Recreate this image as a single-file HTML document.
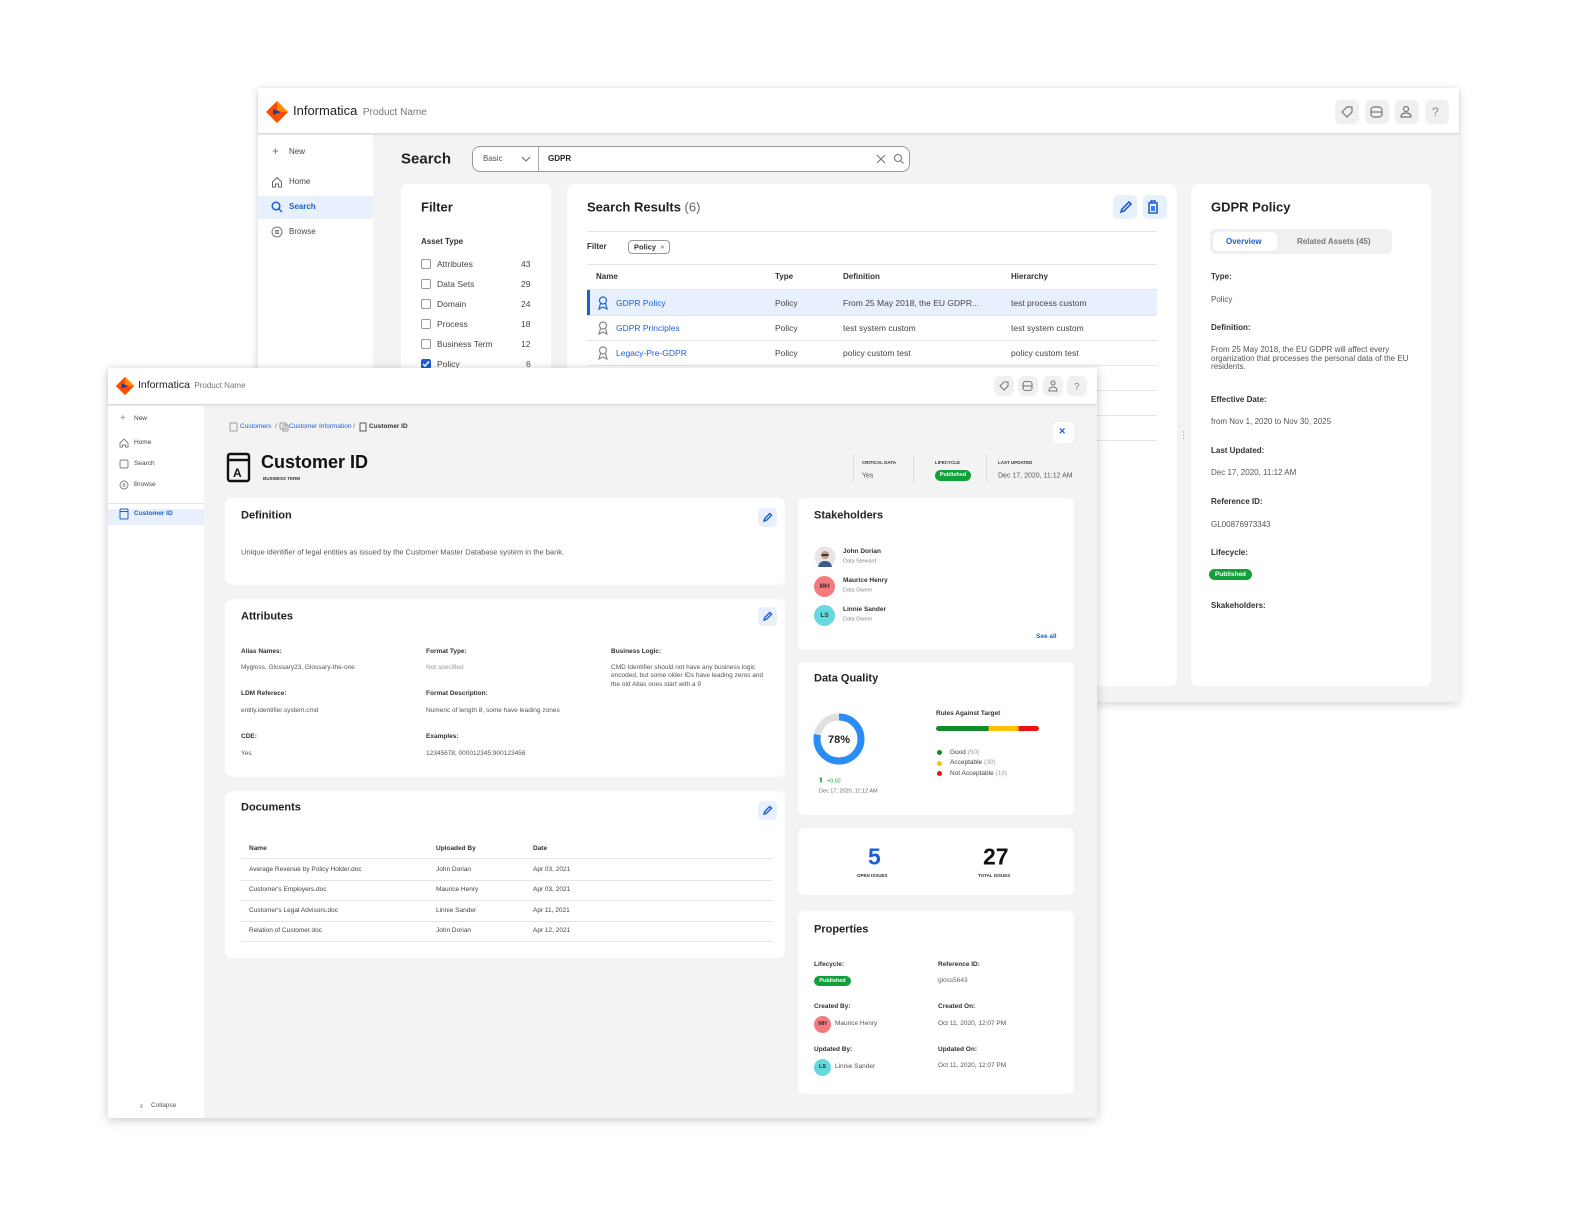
<!DOCTYPE html>
<html><head><meta charset="utf-8">
<style>
*{margin:0;padding:0;box-sizing:border-box}
body{width:1584px;height:1224px;background:#fff;position:relative;overflow:hidden;font-family:"Liberation Sans",Arial,sans-serif;color:#222}
.a{position:absolute}
.t{position:absolute;white-space:nowrap;line-height:1;transform:translateY(-50%)}
.b{font-weight:bold}
.g{color:#666}
.bl{color:#1a5fd6}
.card{position:absolute;background:#fff;border-radius:7px}
.ib{position:absolute;background:#f0f0f0;border-radius:6px}
.eb{position:absolute;background:#e8f0fe;border-radius:5px}
.hl{position:absolute;height:1px;background:#e4e4e4}
.badge{position:absolute;background:#12a03a;color:#fff;font-weight:bold;border-radius:8px;text-align:center}
.cb{position:absolute;width:10px;height:10px;border:1px solid #999;border-radius:2px;background:#fff}
</style></head><body>

<!-- ================= BACK WINDOW ================= -->
<div class="a" style="left:258px;top:88px;width:1201px;height:614px;background:#f3f3f3;box-shadow:0 2px 8px rgba(0,0,0,.18)"></div>
<div class="a" style="left:258px;top:88px;width:1201px;height:46px;background:#fff;border-bottom:1px solid #ddd;box-shadow:0 1px 3px rgba(0,0,0,.08)"></div>
<svg class="a" style="left:265px;top:100px" width="24" height="24" viewBox="0 0 24 24"><polygon points="12,1 23,12 12,23 1,12" fill="#ff4d00"/><polygon points="12,1 23,12 12,12" fill="#ff8a00"/><polygon points="8,9 16,12 8,15" fill="#1b3fa8"/></svg>
<div class="t" style="left:293px;top:111px;font-size:13px;color:#222">Informatica<span style="font-size:10px;color:#777"> &nbsp;Product Name</span></div>
<div class="ib" style="left:1335px;top:100px;width:24px;height:24px"></div>
<div class="ib" style="left:1365px;top:100px;width:24px;height:24px"></div>
<div class="ib" style="left:1395px;top:100px;width:24px;height:24px"></div>
<div class="ib" style="left:1425px;top:100px;width:24px;height:24px"></div>
<svg class="a" style="left:1335px;top:100px" width="120" height="24" viewBox="0 0 120 24" fill="none" stroke="#777" stroke-width="1.2"><path d="M7 12l5-5h5v5l-5 5z"/><rect x="36" y="7" width="11" height="10" rx="3"/><path d="M36 12h11"/><circle cx="71" cy="9" r="2.5"/><path d="M66 17c0-3 2-4 5-4s5 1 5 4z"/><text x="97" y="16" font-size="12" fill="#888" stroke="none" font-family="Liberation Sans">?</text></svg>
<!-- back sidebar -->
<div class="a" style="left:258px;top:135px;width:115px;height:567px;background:#fff"></div>
<div class="a" style="left:258px;top:196px;width:115px;height:23px;background:#e8f0fe"></div>
<div class="t" style="left:272px;top:151px;font-size:12px;color:#777">+</div>
<div class="t" style="left:289px;top:152px;font-size:8px;color:#444">New</div>
<svg class="a" style="left:271px;top:176px" width="12" height="12" viewBox="0 0 12 12" fill="none" stroke="#666"><path d="M1.5 6L6 1.5 10.5 6v5h-3V8h-3v3h-3z"/></svg>
<div class="t" style="left:289px;top:182px;font-size:8px;color:#444">Home</div>
<svg class="a" style="left:271px;top:201px" width="12" height="12" viewBox="0 0 12 12" fill="none" stroke="#1a5fd6" stroke-width="1.5"><circle cx="5" cy="5" r="3.8"/><path d="M8 8l3 3"/></svg>
<div class="t b bl" style="left:289px;top:207px;font-size:8px">Search</div>
<svg class="a" style="left:271px;top:226px" width="12" height="12" viewBox="0 0 12 12" fill="none" stroke="#777"><circle cx="6" cy="6" r="5"/><path d="M4 4.5h4M4 6h4M4 7.5h4"/></svg>
<div class="t" style="left:289px;top:232px;font-size:8px;color:#444">Browse</div>
<!-- search bar -->
<div class="t b" style="left:401px;top:159px;font-size:15px">Search</div>
<div class="a" style="left:472px;top:146px;width:438px;height:26px;border:1px solid #999;border-radius:8px;background:#fff"></div>
<div class="a" style="left:538px;top:147px;width:1px;height:24px;background:#aaa"></div>
<div class="t" style="left:483px;top:159px;font-size:8px;color:#555">Basic</div>
<svg class="a" style="left:521px;top:155px" width="10" height="8"><path d="M1 2l4 4 4-4" fill="none" stroke="#666"/></svg>
<div class="t b" style="left:548px;top:159px;font-size:8px">GDPR</div>
<svg class="a" style="left:876px;top:154px" width="30" height="10" fill="none" stroke="#777" stroke-width="1.1"><path d="M1 1l8 8M9 1l-8 8"/><circle cx="22" cy="4" r="3.5"/><path d="M24.5 6.5l3 3"/></svg>
<!-- filter card -->
<div class="card" style="left:401px;top:184px;width:150px;height:500px"></div>
<div class="t b" style="left:421px;top:207px;font-size:13px">Filter</div>
<div class="t b" style="left:421px;top:242px;font-size:8px;color:#333">Asset Type</div>
<div class="cb" style="left:421px;top:259px"></div><div class="t" style="left:437px;top:264px;font-size:8.5px;color:#444">Attributes</div><div class="t" style="left:521px;top:264px;font-size:8.5px;color:#444">43</div>
<div class="cb" style="left:421px;top:279px"></div><div class="t" style="left:437px;top:284px;font-size:8.5px;color:#444">Data Sets</div><div class="t" style="left:521px;top:284px;font-size:8.5px;color:#444">29</div>
<div class="cb" style="left:421px;top:299px"></div><div class="t" style="left:437px;top:304px;font-size:8.5px;color:#444">Domain</div><div class="t" style="left:521px;top:304px;font-size:8.5px;color:#444">24</div>
<div class="cb" style="left:421px;top:319px"></div><div class="t" style="left:437px;top:324px;font-size:8.5px;color:#444">Process</div><div class="t" style="left:521px;top:324px;font-size:8.5px;color:#444">18</div>
<div class="cb" style="left:421px;top:339px"></div><div class="t" style="left:437px;top:344px;font-size:8.5px;color:#444">Business Term</div><div class="t" style="left:521px;top:344px;font-size:8.5px;color:#444">12</div>
<div class="cb" style="left:421px;top:359px;background:#1a5fd6;border-color:#1a5fd6"></div>
<svg class="a" style="left:421px;top:359px" width="10" height="10"><path d="M2 5l2 2 4-4.5" fill="none" stroke="#fff" stroke-width="1.5"/></svg>
<div class="t" style="left:437px;top:364px;font-size:8.5px;color:#444">Policy</div><div class="t" style="left:526px;top:364px;font-size:8.5px;color:#444">6</div>
<!-- results card -->
<div class="card" style="left:567px;top:184px;width:610px;height:502px"></div>
<div class="t b" style="left:587px;top:207px;font-size:13px">Search Results <span style="font-weight:normal;color:#666">(6)</span></div>
<div class="eb" style="left:1113px;top:195px;width:24px;height:24px"></div>
<div class="eb" style="left:1143px;top:195px;width:24px;height:24px"></div>
<svg class="a" style="left:1113px;top:195px" width="56" height="24" fill="none" stroke="#1a5fd6" stroke-width="1.6"><path d="M8 17l1-3 7-7 2 2-7 7z"/><path d="M35 8h10M38 8V6h4v2M36 9v9h8V9M39 11v5M41 11v5"/></svg>
<div class="hl" style="left:587px;top:231px;width:570px"></div>
<div class="t b" style="left:587px;top:247px;font-size:8px;color:#333">Filter</div>
<div class="a" style="left:628px;top:240px;width:42px;height:14px;border:1px solid #999;border-radius:4px"></div>
<div class="t b" style="left:634px;top:247px;font-size:7.5px;color:#333">Policy <span style="font-weight:normal;color:#666">&nbsp;×</span></div>
<div class="hl" style="left:587px;top:264px;width:570px"></div>
<div class="t b" style="left:596px;top:277px;font-size:8px;color:#333">Name</div>
<div class="t b" style="left:775px;top:277px;font-size:8px;color:#333">Type</div>
<div class="t b" style="left:843px;top:277px;font-size:8px;color:#333">Definition</div>
<div class="t b" style="left:1011px;top:277px;font-size:8px;color:#333">Hierarchy</div>
<div class="a" style="left:587px;top:290px;width:570px;height:25px;background:#e8f0fe"></div>
<div class="a" style="left:587px;top:290px;width:3px;height:25px;background:#1a5fd6"></div>
<div class="hl" style="left:587px;top:289px;width:570px"></div>
<div class="hl" style="left:587px;top:315px;width:570px"></div>
<div class="hl" style="left:587px;top:340px;width:570px"></div>
<div class="hl" style="left:587px;top:365px;width:570px"></div>
<div class="hl" style="left:587px;top:390px;width:570px"></div>
<div class="hl" style="left:587px;top:415px;width:570px"></div>
<div class="hl" style="left:587px;top:440px;width:570px"></div>
<svg class="a" style="left:597px;top:296px" width="12" height="64" fill="none" stroke-width="1.2"><g stroke="#1a5fd6"><circle cx="6" cy="4.5" r="3.5"/><path d="M3.5 7.5L2 13l4-2 4 2-1.5-5.5"/></g><g stroke="#888" transform="translate(0,25)"><circle cx="6" cy="4.5" r="3.5"/><path d="M3.5 7.5L2 13l4-2 4 2-1.5-5.5"/></g><g stroke="#888" transform="translate(0,50)"><circle cx="6" cy="4.5" r="3.5"/><path d="M3.5 7.5L2 13l4-2 4 2-1.5-5.5"/></g></svg>
<div class="t bl" style="left:616px;top:303px;font-size:8.5px">GDPR Policy</div>
<div class="t bl" style="left:616px;top:328px;font-size:8.5px">GDPR Principles</div>
<div class="t bl" style="left:616px;top:353px;font-size:8.5px">Legacy-Pre-GDPR</div>
<div class="t" style="left:775px;top:303px;font-size:8.5px;color:#444">Policy</div>
<div class="t" style="left:775px;top:328px;font-size:8.5px;color:#444">Policy</div>
<div class="t" style="left:775px;top:353px;font-size:8.5px;color:#444">Policy</div>
<div class="t" style="left:843px;top:303px;font-size:8.5px;color:#444">From 25 May 2018, the EU GDPR...</div>
<div class="t" style="left:843px;top:328px;font-size:8.5px;color:#444">test system custom</div>
<div class="t" style="left:843px;top:353px;font-size:8.5px;color:#444">policy custom test</div>
<div class="t" style="left:1011px;top:303px;font-size:8.5px;color:#444">test process custom</div>
<div class="t" style="left:1011px;top:328px;font-size:8.5px;color:#444">test system custom</div>
<div class="t" style="left:1011px;top:353px;font-size:8.5px;color:#444">policy custom test</div>
<div class="t" style="left:1182px;top:435px;font-size:9px;color:#888;line-height:.35">·<br>·<br>·</div>
<!-- detail card -->
<div class="card" style="left:1191px;top:184px;width:240px;height:502px"></div>
<div class="t b" style="left:1211px;top:207px;font-size:13px">GDPR Policy</div>
<div class="a" style="left:1210px;top:229px;width:182px;height:25px;background:#f0f0f0;border-radius:6px"></div>
<div class="a" style="left:1213px;top:232px;width:64px;height:19px;background:#fff;border-radius:5px"></div>
<div class="t b bl" style="left:1226px;top:242px;font-size:8px">Overview</div>
<div class="t b" style="left:1297px;top:242px;font-size:8px;color:#777">Related Assets (45)</div>
<div class="t b" style="left:1211px;top:277px;font-size:8px;color:#333">Type:</div>
<div class="t" style="left:1211px;top:300px;font-size:8px;color:#555">Policy</div>
<div class="t b" style="left:1211px;top:328px;font-size:8px;color:#333">Definition:</div>
<div class="a" style="left:1211px;top:346px;font-size:8px;color:#555;line-height:8.5px;width:200px">From 25 May 2018, the EU GDPR will affect every organization that processes the personal data of the EU residents.</div>
<div class="t b" style="left:1211px;top:400px;font-size:8px;color:#333">Effective Date:</div>
<div class="t" style="left:1211px;top:422px;font-size:8px;color:#555">from Nov 1, 2020 to Nov 30, 2025</div>
<div class="t b" style="left:1211px;top:451px;font-size:8px;color:#333">Last Updated:</div>
<div class="t" style="left:1211px;top:473px;font-size:8px;color:#555">Dec 17, 2020, 11:12 AM</div>
<div class="t b" style="left:1211px;top:502px;font-size:8px;color:#333">Reference ID:</div>
<div class="t" style="left:1211px;top:525px;font-size:8px;color:#555">GL00876973343</div>
<div class="t b" style="left:1211px;top:553px;font-size:8px;color:#333">Lifecycle:</div>
<div class="badge" style="left:1209px;top:569px;width:43px;height:11px;font-size:6.5px;line-height:11px">Published</div>
<div class="t b" style="left:1211px;top:606px;font-size:8px;color:#333">Skakeholders:</div>

<!-- ================= FRONT WINDOW ================= -->
<div class="a" style="left:108px;top:368px;width:989px;height:750px;background:#f3f3f3;box-shadow:0 2px 10px rgba(0,0,0,.22)"></div>
<div class="a" style="left:108px;top:368px;width:989px;height:37px;background:#fff;border-bottom:1px solid #ddd;box-shadow:0 1px 3px rgba(0,0,0,.08)"></div>
<svg class="a" style="left:115px;top:376px" width="20" height="20" viewBox="0 0 24 24"><polygon points="12,1 23,12 12,23 1,12" fill="#ff4d00"/><polygon points="12,1 23,12 12,12" fill="#ff8a00"/><polygon points="8,9 16,12 8,15" fill="#1b3fa8"/></svg>
<div class="t" style="left:138px;top:385px;font-size:10.5px">Informatica<span style="font-size:8px;color:#777"> &nbsp;Product Name</span></div>
<div class="ib" style="left:994px;top:376px;width:20px;height:20px"></div>
<div class="ib" style="left:1018px;top:376px;width:20px;height:20px"></div>
<div class="ib" style="left:1043px;top:376px;width:20px;height:20px"></div>
<div class="ib" style="left:1067px;top:376px;width:20px;height:20px"></div>
<svg class="a" style="left:994px;top:376px" width="96" height="20" fill="none" stroke="#777" stroke-width="1.1"><path d="M6 10l4-4h4v4l-4 4z"/><rect x="29" y="5.5" width="9" height="9" rx="2.5"/><path d="M29 10h9"/><circle cx="59" cy="7" r="2"/><path d="M55 15c0-3 2-4 4-4s4 1 4 4z"/><text x="80" y="14" font-size="10" fill="#888" stroke="none" font-family="Liberation Sans">?</text></svg>
<!-- front sidebar -->
<div class="a" style="left:108px;top:406px;width:96px;height:712px;background:#fff"></div>
<div class="a" style="left:108px;top:503px;width:96px;height:1px;background:#e4e4e4"></div>
<div class="a" style="left:108px;top:509px;width:96px;height:16px;background:#e8f0fe"></div>
<div class="t" style="left:120px;top:419px;font-size:10px;color:#888">+</div>
<div class="t" style="left:134px;top:419px;font-size:6.5px;color:#444">New</div>
<svg class="a" style="left:119px;top:438px" width="10" height="10" fill="none" stroke="#777" stroke-width=".9"><path d="M1 5L5 1l4 4v4H6.5V7h-3v2H1z"/></svg>
<div class="t" style="left:134px;top:443px;font-size:6.5px;color:#444">Home</div>
<svg class="a" style="left:119px;top:459px" width="10" height="10" fill="none" stroke="#777" stroke-width=".9"><rect x="1" y="1" width="8" height="8" rx="1.5"/></svg>
<div class="t" style="left:134px;top:464px;font-size:6.5px;color:#444">Search</div>
<svg class="a" style="left:119px;top:480px" width="10" height="10" fill="none" stroke="#777" stroke-width=".9"><circle cx="5" cy="5" r="4"/><path d="M3.5 4h3M3.5 6h3"/></svg>
<div class="t" style="left:134px;top:485px;font-size:6.5px;color:#444">Browse</div>
<svg class="a" style="left:119px;top:508px" width="10" height="12" fill="none" stroke="#1a5fd6" stroke-width="1"><rect x="1" y="1" width="8" height="10" rx="1"/><path d="M1 3.5h8"/></svg>
<div class="t b bl" style="left:134px;top:514px;font-size:6.5px">Customer ID</div>
<div class="t" style="left:140px;top:1106px;font-size:9px;color:#666">‹</div>
<div class="t" style="left:151px;top:1106px;font-size:6.5px;color:#555">Collapse</div>
<!-- breadcrumb -->
<svg class="a" style="left:229px;top:422px" width="150" height="10" fill="none" stroke="#888" stroke-width=".8"><rect x="1" y="1" width="7" height="8"/><rect x="51" y="1" width="6" height="6"/><rect x="54" y="3" width="5" height="6"/><rect x="131" y="1" width="6" height="8" stroke="#333"/></svg>
<div class="t" style="left:240px;top:427px;font-size:6.5px"><span class="bl">Customers</span> <span class="g">&nbsp;/&nbsp;</span></div>
<div class="t bl" style="left:289px;top:427px;font-size:6.5px">Customer Information</div>
<div class="t g" style="left:353px;top:427px;font-size:6.5px">/</div>
<div class="t b" style="left:369px;top:427px;font-size:6.5px;color:#333">Customer ID</div>
<svg class="a" style="left:226px;top:452px" width="26" height="32" fill="none" stroke="#111" stroke-width="2.4"><rect x="2" y="2" width="21" height="27" rx="2"/><path d="M2 8h21"/><text x="7" y="25" font-size="12" font-weight="bold" fill="#111" stroke="none" font-family="Liberation Sans">A</text></svg>
<div class="t b" style="left:261px;top:462px;font-size:18px;color:#111">Customer ID</div>
<div class="t b" style="left:263px;top:479px;font-size:4.5px;color:#333">BUSINESS TERM</div>
<div class="a" style="left:1053px;top:422px;width:21px;height:21px;background:#fff;border-radius:5px"></div>
<div class="t b bl" style="left:1059px;top:432px;font-size:11px">×</div>
<div class="a" style="left:853px;top:455px;width:1px;height:28px;background:#ddd"></div>
<div class="a" style="left:913px;top:455px;width:1px;height:28px;background:#ddd"></div>
<div class="a" style="left:986px;top:455px;width:1px;height:28px;background:#ddd"></div>
<div class="t b" style="left:862px;top:463px;font-size:4.5px;color:#333">CRITICAL DATA</div>
<div class="t" style="left:862px;top:476px;font-size:7px;color:#555">Yes</div>
<div class="t b" style="left:935px;top:463px;font-size:4.5px;color:#333">LIFECYCLE</div>
<div class="badge" style="left:935px;top:470px;width:36px;height:11px;font-size:5.5px;line-height:11px">Published</div>
<div class="t b" style="left:998px;top:463px;font-size:4.5px;color:#333">LAST UPDATED</div>
<div class="t" style="left:998px;top:476px;font-size:7px;color:#555">Dec 17, 2020, 11:12 AM</div>
<!-- Definition -->
<div class="card" style="left:225px;top:498px;width:560px;height:87px"></div>
<div class="t b" style="left:241px;top:516px;font-size:11px">Definition</div>
<div class="eb" style="left:758px;top:508px;width:19px;height:19px"></div>
<div class="t" style="left:241px;top:552px;font-size:7.5px;color:#555">Unique identifier of legal entities as issued by the Customer Master Database system in the bank.</div>
<!-- Attributes -->
<div class="card" style="left:225px;top:599px;width:560px;height:178px"></div>
<div class="t b" style="left:241px;top:617px;font-size:11px">Attributes</div>
<div class="eb" style="left:758px;top:607px;width:19px;height:19px"></div>
<div class="t b" style="left:241px;top:652px;font-size:6.5px;color:#333">Alias Names:</div>
<div class="t" style="left:241px;top:668px;font-size:6.5px;color:#555">Mygloss, Glossary23, Glossary-the-one</div>
<div class="t b" style="left:241px;top:694px;font-size:6.5px;color:#333">LDM Referece:</div>
<div class="t" style="left:241px;top:711px;font-size:6.5px;color:#555">entity.identifier.system.cmd</div>
<div class="t b" style="left:241px;top:737px;font-size:6.5px;color:#333">CDE:</div>
<div class="t" style="left:241px;top:754px;font-size:6.5px;color:#555">Yes</div>
<div class="t b" style="left:426px;top:652px;font-size:6.5px;color:#333">Format Type:</div>
<div class="t" style="left:426px;top:668px;font-size:6.5px;color:#999">Not specified</div>
<div class="t b" style="left:426px;top:694px;font-size:6.5px;color:#333">Format Description:</div>
<div class="t" style="left:426px;top:711px;font-size:6.5px;color:#555">Numeric of length 8, some have leading zones</div>
<div class="t b" style="left:426px;top:737px;font-size:6.5px;color:#333">Examples:</div>
<div class="t" style="left:426px;top:754px;font-size:6.5px;color:#555">12345678; 000012345;900123456</div>
<div class="t b" style="left:611px;top:652px;font-size:6.5px;color:#333">Business Logic:</div>
<div class="a" style="left:611px;top:664px;width:160px;font-size:6.5px;line-height:8.3px;color:#555">CMD Identifier should not have any business logic encoded, but some older IDs have leading zeros and the old Atlas ones start with a 9</div>
<!-- Documents -->
<div class="card" style="left:225px;top:791px;width:560px;height:167px"></div>
<div class="t b" style="left:241px;top:808px;font-size:11px">Documents</div>
<div class="eb" style="left:758px;top:801px;width:19px;height:19px"></div>
<div class="t b" style="left:249px;top:849px;font-size:6.5px;color:#333">Name</div>
<div class="t b" style="left:436px;top:849px;font-size:6.5px;color:#333">Uploaded By</div>
<div class="t b" style="left:533px;top:849px;font-size:6.5px;color:#333">Date</div>
<div class="hl" style="left:241px;top:858px;width:531px"></div>
<div class="hl" style="left:241px;top:880px;width:531px"></div>
<div class="hl" style="left:241px;top:900px;width:531px"></div>
<div class="hl" style="left:241px;top:921px;width:531px"></div>
<div class="hl" style="left:241px;top:941px;width:531px"></div>
<div class="t" style="left:249px;top:870px;font-size:6.5px;color:#444">Average Revenue by Policy Holder.doc</div>
<div class="t" style="left:249px;top:890px;font-size:6.5px;color:#444">Customer's Employers.doc</div>
<div class="t" style="left:249px;top:911px;font-size:6.5px;color:#444">Customer's Legal Advisors.doc</div>
<div class="t" style="left:249px;top:931px;font-size:6.5px;color:#444">Relation of Customer.doc</div>
<div class="t" style="left:436px;top:870px;font-size:6.5px;color:#444">John Dorian</div>
<div class="t" style="left:436px;top:890px;font-size:6.5px;color:#444">Maurice Henry</div>
<div class="t" style="left:436px;top:911px;font-size:6.5px;color:#444">Linnie Sander</div>
<div class="t" style="left:436px;top:931px;font-size:6.5px;color:#444">John Dorian</div>
<div class="t" style="left:533px;top:870px;font-size:6.5px;color:#444">Apr 03, 2021</div>
<div class="t" style="left:533px;top:890px;font-size:6.5px;color:#444">Apr 03, 2021</div>
<div class="t" style="left:533px;top:911px;font-size:6.5px;color:#444">Apr 11, 2021</div>
<div class="t" style="left:533px;top:931px;font-size:6.5px;color:#444">Apr 12, 2021</div>
<!-- pencil icons -->
<svg class="a" style="left:758px;top:508px" width="19" height="313" fill="none" stroke="#1a5fd6" stroke-width="1.4"><path d="M6 13l.8-2.5 5-5 1.7 1.7-5 5z"/><path d="M6 112l.8-2.5 5-5 1.7 1.7-5 5z"/><path d="M6 306l.8-2.5 5-5 1.7 1.7-5 5z"/></svg>
<!-- Stakeholders -->
<div class="card" style="left:798px;top:498px;width:276px;height:152px"></div>
<div class="t b" style="left:814px;top:516px;font-size:11px">Stakeholders</div>
<svg class="a" style="left:814px;top:546px" width="22" height="22"><circle cx="11" cy="11" r="10.5" fill="#e6e6e6"/><circle cx="11" cy="9" r="4" fill="#c99a80"/><rect x="7.5" y="8" width="7" height="2" fill="#333"/><path d="M4 21c1-5 4-6 7-6s6 1 7 6z" fill="#3c5a8a"/></svg>
<div class="a" style="left:814px;top:576px;width:21px;height:21px;border-radius:50%;background:#f47a80;font-size:6.5px;font-weight:bold;color:#333;text-align:center;line-height:21px">MH</div>
<div class="a" style="left:814px;top:605px;width:21px;height:21px;border-radius:50%;background:#66d9de;font-size:6.5px;font-weight:bold;color:#333;text-align:center;line-height:21px">LS</div>
<div class="t b" style="left:843px;top:552px;font-size:6.5px;color:#333">John Dorian</div>
<div class="t" style="left:843px;top:562px;font-size:5.5px;color:#888">Data Steward</div>
<div class="t b" style="left:843px;top:581px;font-size:6.5px;color:#333">Maurice Henry</div>
<div class="t" style="left:843px;top:591px;font-size:5.5px;color:#888">Data Owner</div>
<div class="t b" style="left:843px;top:610px;font-size:6.5px;color:#333">Linnie Sander</div>
<div class="t" style="left:843px;top:620px;font-size:5.5px;color:#888">Data Owner</div>
<div class="t b bl" style="left:1036px;top:637px;font-size:6.5px">See all</div>
<!-- Data Quality -->
<div class="card" style="left:798px;top:662px;width:276px;height:153px"></div>
<div class="t b" style="left:814px;top:679px;font-size:11px">Data Quality</div>
<svg class="a" style="left:813px;top:713px" width="52" height="52"><circle cx="26" cy="26" r="22" fill="none" stroke="#e0e0e0" stroke-width="7"/><circle cx="26" cy="26" r="22" fill="none" stroke="#2a8cf5" stroke-width="7" stroke-dasharray="107.8 138.2" transform="rotate(-90 26 26)"/><text x="26" y="30" text-anchor="middle" font-size="11" font-weight="bold" fill="#222" font-family="Liberation Sans">78%</text></svg>
<div class="t" style="left:818px;top:781px;font-size:7px;color:#2aa040">⬆<span style="font-size:5.5px"> &nbsp;+0.02</span></div>
<div class="t" style="left:819px;top:792px;font-size:5.5px;color:#666">Dec 17, 2020, 11:12 AM</div>
<div class="t b" style="left:936px;top:714px;font-size:6.5px;color:#333">Rules Against Target</div>
<div class="a" style="left:936px;top:726px;width:103px;height:5px;border-radius:3px;background:linear-gradient(90deg,#118a2a 0 51%,#ffc000 51% 80%,#f01010 80% 100%)"></div>
<div class="a" style="left:937px;top:750px;width:5px;height:5px;border-radius:50%;background:#118a2a"></div>
<div class="a" style="left:937px;top:761px;width:5px;height:5px;border-radius:50%;background:#ffc000"></div>
<div class="a" style="left:937px;top:771px;width:5px;height:5px;border-radius:50%;background:#f01010"></div>
<div class="t" style="left:950px;top:753px;font-size:6.5px;color:#444">Good <span style="color:#999">(50)</span></div>
<div class="t" style="left:950px;top:763px;font-size:6.5px;color:#444">Acceptable <span style="color:#999">(30)</span></div>
<div class="t" style="left:950px;top:774px;font-size:6.5px;color:#444">Not Acceptable <span style="color:#999">(19)</span></div>
<!-- Issues -->
<div class="card" style="left:798px;top:828px;width:276px;height:67px"></div>
<div class="t b" style="left:868px;top:857px;font-size:23px;color:#1a5fd6">5</div>
<div class="t b" style="left:857px;top:876px;font-size:4.5px;color:#333">OPEN ISSUES</div>
<div class="t b" style="left:983px;top:857px;font-size:23px;color:#111">27</div>
<div class="t b" style="left:978px;top:876px;font-size:4.5px;color:#333">TOTAL ISSUES</div>
<!-- Properties -->
<div class="card" style="left:798px;top:911px;width:276px;height:183px"></div>
<div class="t b" style="left:814px;top:930px;font-size:11px">Properties</div>
<div class="t b" style="left:814px;top:965px;font-size:6.5px;color:#333">Lifecycle:</div>
<div class="badge" style="left:814px;top:976px;width:37px;height:10px;font-size:5.5px;line-height:10px">Published</div>
<div class="t b" style="left:938px;top:965px;font-size:6.5px;color:#333">Reference ID:</div>
<div class="t" style="left:938px;top:981px;font-size:6.5px;color:#666">gloss5643</div>
<div class="t b" style="left:814px;top:1007px;font-size:6.5px;color:#333">Created By:</div>
<div class="a" style="left:814px;top:1016px;width:17px;height:17px;border-radius:50%;background:#f47a80;font-size:5.5px;font-weight:bold;color:#333;text-align:center;line-height:17px">MH</div>
<div class="t" style="left:835px;top:1024px;font-size:6.5px;color:#555">Maurice Henry</div>
<div class="t b" style="left:938px;top:1007px;font-size:6.5px;color:#333">Created On:</div>
<div class="t" style="left:938px;top:1024px;font-size:6.5px;color:#555">Oct 11, 2020, 12:07 PM</div>
<div class="t b" style="left:814px;top:1050px;font-size:6.5px;color:#333">Updated By:</div>
<div class="a" style="left:814px;top:1059px;width:17px;height:17px;border-radius:50%;background:#66d9de;font-size:5.5px;font-weight:bold;color:#333;text-align:center;line-height:17px">LS</div>
<div class="t" style="left:835px;top:1067px;font-size:6.5px;color:#555">Linnie Sander</div>
<div class="t b" style="left:938px;top:1050px;font-size:6.5px;color:#333">Updated On:</div>
<div class="t" style="left:938px;top:1066px;font-size:6.5px;color:#555">Oct 11, 2020, 12:07 PM</div>
</body></html>
